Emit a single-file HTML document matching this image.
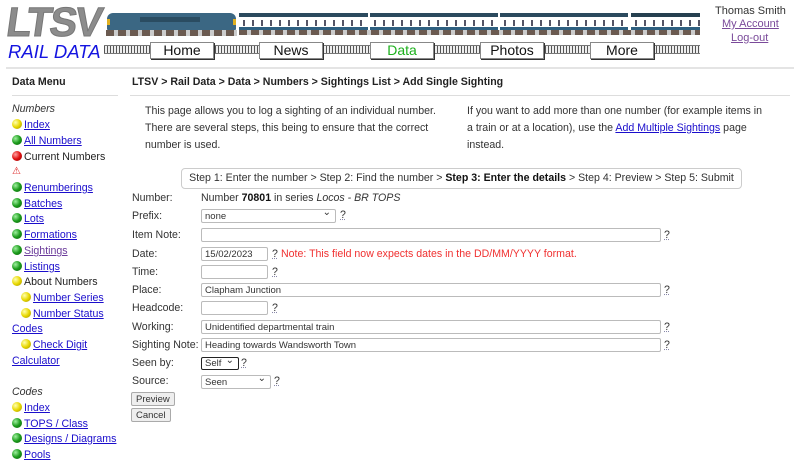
<!DOCTYPE html>
<html><head><meta charset="utf-8"><style>
*{margin:0;padding:0;box-sizing:border-box}
body{width:800px;height:457px;overflow:hidden;background:#fff;font-family:"Liberation Sans",Arial,sans-serif;color:#222;position:relative;font-size:10.6px}
.a{position:absolute;white-space:nowrap}
a{color:#1a0dcc;text-decoration:underline}
.logo{left:7px;top:0px;font-size:41px;font-weight:900;color:#8c8c8c;letter-spacing:-2px;transform:skewX(-8deg);-webkit-text-stroke:1px #777;line-height:44px}
.rd{left:8px;top:41px;font-size:18.5px;font-style:italic;color:#1414e0}
.rail{position:absolute;top:45px;height:9px;background:repeating-linear-gradient(90deg,#555 0 1px,#eee 1px 3px);border-top:1px solid #777;border-bottom:1px solid #777}
.btn{position:absolute;top:42px;height:17px;width:64px;border:1px solid #888;box-shadow:1px 1px 0 #333;background:#fff;font-size:14px;text-align:center;line-height:15px;color:#111}
.coach{position:absolute;top:13px;height:17px;background:#fff;border-top:4px solid #2b4a5e;border-bottom:3px solid #2e5f80}
.coach i{position:absolute;top:3px;height:6px;left:0;right:0;background:repeating-linear-gradient(90deg,transparent 0 4px,#556 4px 6px,transparent 6px 9px)}
.uf{position:absolute;top:30px;height:5px;background:repeating-linear-gradient(90deg,#6b5a50 0 8px,#ccc 8px 12px)}
.dot{display:inline-block;width:10px;height:10px;border-radius:50%;vertical-align:-1px;margin-right:2px}
.y{background:radial-gradient(circle at 35% 35%,#ffffb0,#e8d800 50%,#9a8a00)}
.g{background:radial-gradient(circle at 35% 35%,#a0f0a0,#1c9c1c 50%,#0b5a0b)}
.r{background:radial-gradient(circle at 35% 35%,#ffa0a0,#e01010 50%,#800)}
.side div{position:absolute;left:12px;font-size:10.6px;white-space:nowrap}
.lab{position:absolute;left:132px;font-size:10.6px;color:#333}
.inp{position:absolute;left:201px;height:14px;border:1px solid #bbb;border-radius:2px;background:#fff;font-size:9.5px;padding:1px 0 0 3px;line-height:12px;color:#333;white-space:nowrap}
.q{position:absolute;font-size:10.6px;color:#333;text-decoration:underline dotted #88a}
.sel::after{content:"⌄";position:absolute;right:4px;top:-3px;font-size:10px}
.b{position:absolute;left:131px;height:14px;border:1px solid #aaa;background:#eee;font-size:9.5px;padding:1px 4px 0;line-height:12px;color:#333;border-radius:2px}
</style></head><body>
<div class="a logo">LTSV</div>
<div class="a rd">RAIL DATA</div>
<div style="position:absolute;left:107px;top:13px;width:129px;height:17px;background:#3b6783;border-radius:6px 6px 1px 1px"></div>
<div style="position:absolute;left:140px;top:17px;width:60px;height:5px;background:#2a4c61"></div>
<div style="position:absolute;left:107px;top:19px;width:3px;height:6px;background:#e0b020"></div>
<div style="position:absolute;left:233px;top:19px;width:3px;height:6px;background:#e0b020"></div>
<div class="uf" style="left:106px;width:131px;top:30px;height:6px"></div>
<div class="coach" style="left:239px;width:129px"><i></i></div>
<div class="coach" style="left:370px;width:128px"><i></i></div>
<div class="coach" style="left:500px;width:128px"><i></i></div>
<div class="coach" style="left:631px;width:69px;border-top-color:#264050"><i></i></div>
<div class="uf" style="left:239px;width:461px"></div>
<div class="rail" style="left:104px;width:596px"></div>
<div class="btn" style="left:150px">Home</div>
<div class="btn" style="left:259px">News</div>
<div class="btn" style="left:370px;color:#1cb01c">Data</div>
<div class="btn" style="left:480px">Photos</div>
<div class="btn" style="left:590px">More</div>
<div class="a" style="left:715px;top:5px;font-size:11px;color:#333">Thomas Smith</div>
<div class="a" style="left:722px;top:18px;font-size:11px"><a style="color:#7a4a9a">My Account</a></div>
<div class="a" style="left:731px;top:32px;font-size:11px"><a style="color:#7a4a9a">Log-out</a></div>
<div style="position:absolute;left:6px;top:67px;width:788px;height:2px;background:#e4e4e4"></div>

<div class="side">
<div style="top:76px;font-weight:bold">Data Menu</div>
<div style="top:95px;left:12px;width:106px;height:1px;background:#ddd"></div>
<div style="top:103px;font-style:italic;color:#333">Numbers</div>
<div style="top:119px"><span class="dot y"></span><a>Index</a></div>
<div style="top:135px"><span class="dot g"></span><a>All Numbers</a></div>
<div style="top:151px"><span class="dot r"></span>Current Numbers</div>
<div style="top:166px;color:#d22;font-size:10px">⚠</div>
<div style="top:182px"><span class="dot g"></span><a>Renumberings</a></div>
<div style="top:198px"><span class="dot g"></span><a>Batches</a></div>
<div style="top:213px"><span class="dot g"></span><a>Lots</a></div>
<div style="top:229px"><span class="dot g"></span><a>Formations</a></div>
<div style="top:245px"><span class="dot g"></span><a style="color:#6a3a9a">Sightings</a></div>
<div style="top:261px"><span class="dot g"></span><a>Listings</a></div>
<div style="top:276px"><span class="dot y"></span>About Numbers</div>
<div style="top:292px;left:21px"><span class="dot y"></span><a>Number Series</a></div>
<div style="top:308px;left:21px"><span class="dot y"></span><a>Number Status</a></div>
<div style="top:323px"><a>Codes</a></div>
<div style="top:339px;left:21px"><span class="dot y"></span><a>Check Digit</a></div>
<div style="top:355px"><a>Calculator</a></div>
<div style="top:386px;font-style:italic;color:#333">Codes</div>
<div style="top:402px"><span class="dot y"></span><a>Index</a></div>
<div style="top:418px"><span class="dot g"></span><a>TOPS / Class</a></div>
<div style="top:433px"><span class="dot g"></span><a>Designs / Diagrams</a></div>
<div style="top:449px"><span class="dot g"></span><a>Pools</a></div>
</div>

<div class="a" style="left:132px;top:76px;font-weight:bold;font-size:10.6px">LTSV &gt; Rail Data &gt; Data &gt; Numbers &gt; Sightings List &gt; Add Single Sighting</div>
<div style="position:absolute;left:130px;top:95px;width:660px;height:1px;background:#ddd"></div>
<div class="a" style="left:145px;top:103px;line-height:17px;color:#333">This page allows you to log a sighting of an individual number.<br>There are several steps, this being to ensure that the correct<br>number is used.</div>
<div class="a" style="left:467px;top:103px;line-height:17px;color:#333">If you want to add more than one number (for example items in<br>a train or at a location), use the <a>Add Multiple Sightings</a> page<br>instead.</div>
<div style="position:absolute;left:181px;top:168px;width:561px;height:21px;border:1px solid #ccc;border-radius:4px;text-align:center;line-height:19px;color:#333;white-space:nowrap;font-size:10.6px">Step 1: Enter the number &gt; Step 2: Find the number &gt; <b style="color:#111">Step 3: Enter the details</b> &gt; Step 4: Preview &gt; Step 5: Submit</div>

<div class="lab" style="top:192px">Number:</div>
<div class="a" style="left:201px;top:192px;color:#333">Number <b style="color:#111">70801</b> in series <i>Locos - BR TOPS</i></div>
<div class="lab" style="top:210px">Prefix:</div>
<div class="inp sel" style="top:209px;width:135px">none</div><div class="q" style="left:340px;top:209px">?</div>
<div class="lab" style="top:229px">Item Note:</div>
<div class="inp" style="top:228px;width:460px"></div><div class="q" style="left:664px;top:229px">?</div>
<div class="lab" style="top:248px">Date:</div>
<div class="inp" style="top:247px;width:67px">15/02/2023</div><div class="q" style="left:272px;top:248px">?</div>
<div class="a" style="left:281px;top:248px;color:#f03030">Note: This field now expects dates in the DD/MM/YYYY format.</div>
<div class="lab" style="top:266px">Time:</div>
<div class="inp" style="top:265px;width:67px"></div><div class="q" style="left:272px;top:266px">?</div>
<div class="lab" style="top:284px">Place:</div>
<div class="inp" style="top:283px;width:460px">Clapham Junction</div><div class="q" style="left:664px;top:284px">?</div>
<div class="lab" style="top:302px">Headcode:</div>
<div class="inp" style="top:301px;width:67px"></div><div class="q" style="left:272px;top:302px">?</div>
<div class="lab" style="top:321px">Working:</div>
<div class="inp" style="top:320px;width:460px">Unidentified departmental train</div><div class="q" style="left:664px;top:321px">?</div>
<div class="lab" style="top:339px">Sighting Note:</div>
<div class="inp" style="top:338px;width:460px">Heading towards Wandsworth Town</div><div class="q" style="left:664px;top:339px">?</div>
<div class="lab" style="top:357px">Seen by:</div>
<div class="inp sel" style="top:357px;width:38px;border:1px solid #222;height:13px;padding-top:0">Self</div><div class="q" style="left:241px;top:357px">?</div>
<div class="lab" style="top:375px">Source:</div>
<div class="inp sel" style="top:375px;width:70px">Seen</div><div class="q" style="left:274px;top:375px">?</div>
<div class="b" style="top:392px">Preview</div>
<div class="b" style="top:408px">Cancel</div>
</body></html>
